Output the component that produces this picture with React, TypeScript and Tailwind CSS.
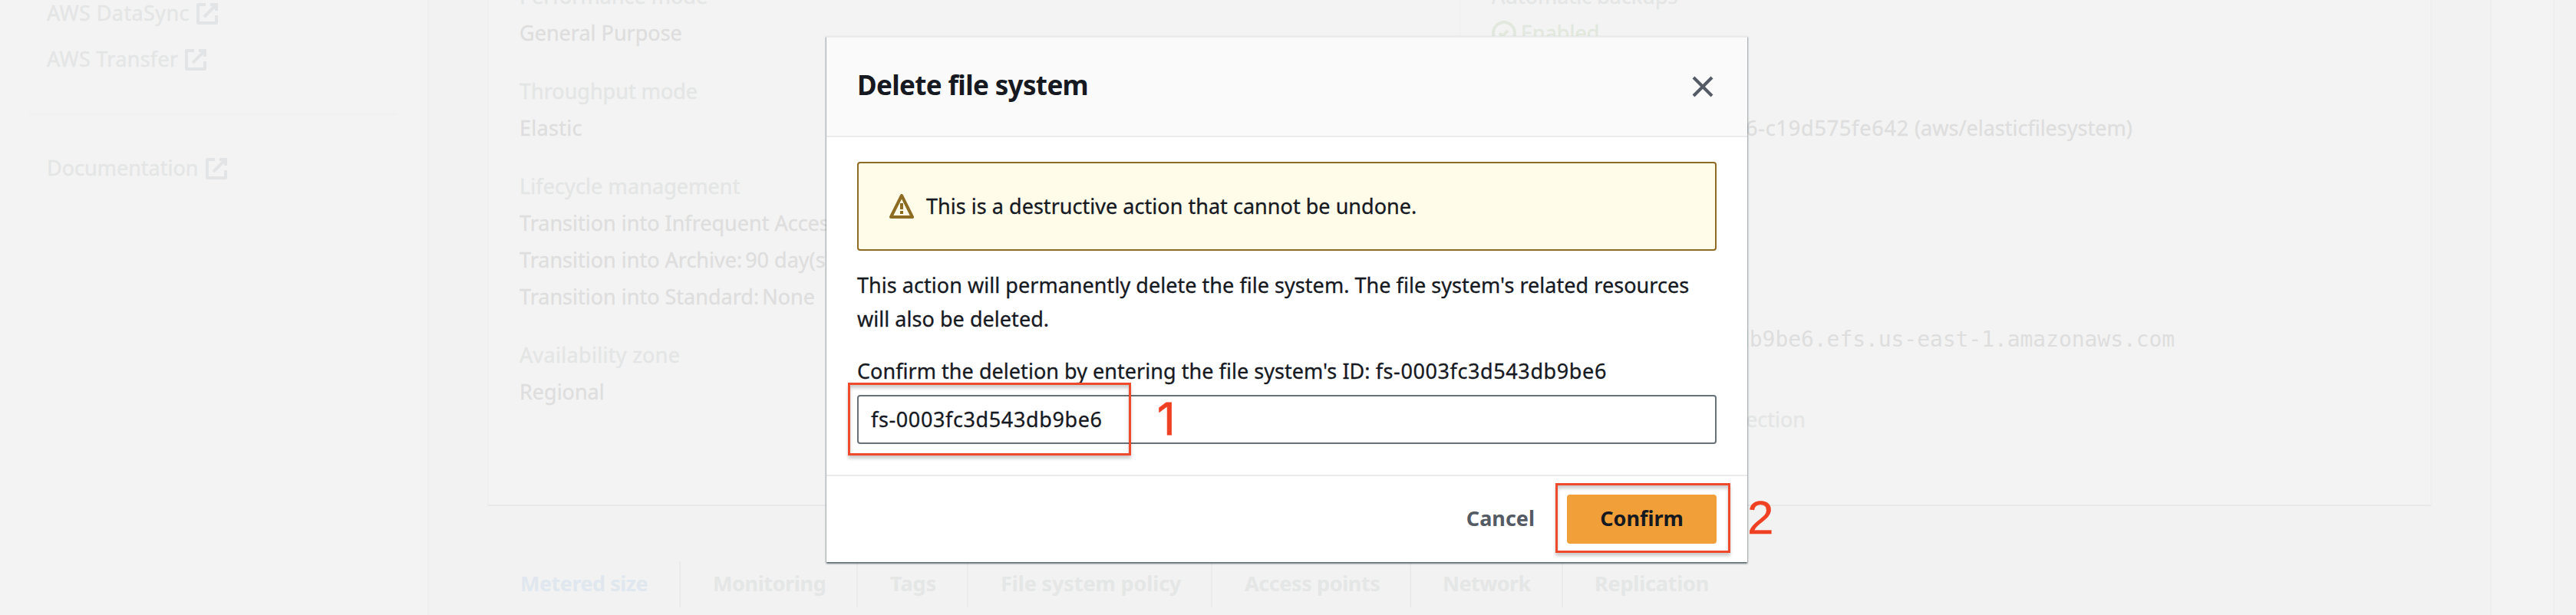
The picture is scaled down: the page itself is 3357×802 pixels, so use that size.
import type { ReactNode } from "react";

function ExternalIcon() {
  return (
    <svg viewBox="0 0 16 16" className="mt-0.5 size-8 shrink-0 fill-none stroke-[#e2e4e6]" strokeWidth="2">
      <path d="M10 2h4v4" />
      <path d="m6 10 8-8" />
      <path d="M14 9.048V14H2V2h5" strokeLinejoin="round" />
    </svg>
  );
}

function NavLink({ children, className }: { children: ReactNode; className: string }) {
  return (
    <a className={`flex h-11 items-center leading-[44px] whitespace-nowrap text-[#e4e5e5] ${className}`}>
      <span>{children}</span>
      <ExternalIcon />
    </a>
  );
}

function Label({ children, className = "" }: { children: ReactNode; className?: string }) {
  return <div className={`h-11 leading-[44px] whitespace-nowrap text-[#e4e5e5] ${className}`}>{children}</div>;
}

function Value({ children, className = "text-[#dedede]" }: { children: ReactNode; className?: string }) {
  return <div className={`h-11 leading-[44px] whitespace-nowrap ${className}`}>{children}</div>;
}

function Field({ children }: { children: ReactNode }) {
  return <div className="flex flex-col gap-1">{children}</div>;
}

function SideNav() {
  return (
    <nav className="w-[559px] shrink-0 border-r-2 border-[#eeeeee] bg-[#f3f3f3]">
      <div className="-mt-[5px] flex flex-col gap-4 pl-[61px]">
        <NavLink className="gap-[7px] tracking-[0.4px]">AWS DataSync</NavLink>
        <NavLink className="gap-[7px] tracking-[0.3px]">AWS Transfer</NavLink>
      </div>
      <div className="mt-[49px] ml-[37px] h-0.5 w-[480px] bg-[#f1f1f1]" />
      <div className="mt-[47px] pl-[61px]">
        <NavLink className="gap-[8px]">Documentation</NavLink>
      </div>
    </nav>
  );
}

function GeneralPanel() {
  return (
    <section className="flex h-[660px] w-full border-x-2 border-b-2 border-x-[#efefef] border-b-[#e8e8e8] bg-[#f3f3f3]">
      <div className="w-[1265px] shrink-0 pl-10">
        <div className="-mt-[27px] flex flex-col gap-8">
          <Field>
            <Label>Performance mode</Label>
            <Value>General Purpose</Value>
          </Field>
          <Field>
            <Label>Throughput mode</Label>
            <Value className="tracking-[0.3px] text-[#dedede]">Elastic</Value>
          </Field>
          <Field>
            <Label className="tracking-[0.1px]">Lifecycle management</Label>
            <Value>Transition into Infrequent Access</Value>
            <Value>
              Transition into Archive:<span className="ml-1">90 day(s)</span>
            </Value>
            <Value>
              Transition into Standard:<span className="ml-1">None</span>
            </Value>
          </Field>
          <Field>
            <Label className="tracking-[0.3px]">Availability zone</Label>
            <Value>Regional</Value>
          </Field>
        </div>
      </div>
      <div className="grow border-l-2 border-[#f1f1f1] pl-10">
        <div className="-mt-[27px] flex flex-col">
          <Field>
            <Label>Automatic backups</Label>
            <Value className="flex items-center gap-[6px] text-[#e2e8de]">
              <svg viewBox="0 0 16 16" className="size-8 fill-none stroke-[#e2e8de]" strokeWidth="2">
                <circle cx="8" cy="8" r="7" />
                <path d="m5 8 2 2 3.521-3.521" />
              </svg>
              Enabled
            </Value>
          </Field>
          <Value className="mt-20 pl-[331px] text-[#dedede]">
            <span className="tracking-[0.8px]">6-c19d575fe642</span> (aws/elasticfilesystem)
          </Value>
          <Value className="mt-[232px] pl-[319px] font-['DejaVu_Sans_Mono',monospace] text-[28px] tracking-[-0.06px] text-[#dedede] [-webkit-text-stroke:0]">
            db9be6.efs.us-east-1.amazonaws.com
          </Value>
          <Label className="mt-[60px] pl-[331px]">ection</Label>
        </div>
      </div>
    </section>
  );
}

function Tab({ children, className }: { children: ReactNode; className: string }) {
  return (
    <div className={`h-[60px] shrink-0 border-[#ebebeb] pt-[7px] leading-[44px] font-bold whitespace-nowrap [-webkit-text-stroke:0] ${className}`}>
      {children}
    </div>
  );
}

function Tabs() {
  return (
    <div className="mt-[72px] flex">
      <Tab className="w-[252px] border-r-2 pl-[43px] tracking-[-0.5px] text-[#e0e7ee]">Metered size</Tab>
      <Tab className="w-[231px] border-r-2 pl-[42px] tracking-[-0.4px] text-[#e5e6e6]">Monitoring</Tab>
      <Tab className="w-[144px] border-r-2 pl-[42px] text-[#e5e6e6]">Tags</Tab>
      <Tab className="w-[318px] border-r-2 pl-[42px] tracking-[-0.1px] text-[#e5e6e6]">File system policy</Tab>
      <Tab className="w-[259px] border-r-2 pl-[42px] tracking-[-0.4px] text-[#e5e6e6]">Access points</Tab>
      <Tab className="w-[198px] border-r-2 pl-[41px] tracking-[-0.55px] text-[#e5e6e6]">Network</Tab>
      <Tab className="w-[240px] pl-[41px] tracking-[-0.2px] text-[#e5e6e6]">Replication</Tab>
    </div>
  );
}

function DeleteDialog() {
  return (
    <div
      role="dialog"
      className="absolute top-[47px] left-[1077px] w-[1200px] bg-white text-[#16191f] shadow-[0_2px_2px_0_rgba(0,28,36,0.5),1px_1px_2px_0_rgba(0,28,36,0.2),-1px_1px_2px_0_rgba(0,28,36,0.2)]"
    >
      <header className="flex h-[132px] items-center justify-between border-y-2 border-[#eaebeb] bg-[#fafafa] pr-[42px] pl-10">
        <h2 className="pb-[5px] text-[35px] leading-[44px] font-bold tracking-[-0.65px] [-webkit-text-stroke:0]">Delete file system</h2>
        <svg viewBox="0 0 16 16" className="size-8 fill-none stroke-[#545b64]" strokeWidth="2">
          <path d="m2 2 12 12" />
          <path d="M14 2 2 14" />
        </svg>
      </header>
      <div className="px-10 pt-8 pb-10">
        <div className="flex h-[116px] items-center gap-4 rounded-[4px] border-2 border-[#8d6b22] bg-[#fffce9] pl-10">
          <svg viewBox="0 0 16 16" className="size-8 fill-none stroke-[#8d6b22]" strokeWidth="2">
            <path d="m8 1 7 14H1L8 1Z" strokeLinejoin="round" />
            <path d="M8 6v4M8 11v2" />
          </svg>
          <span className="pb-px leading-[44px] tracking-[0.03px]">This is a destructive action that cannot be undone.</span>
        </div>
        <p className="mt-[23px] leading-[44px] tracking-[0.04px]">
          This action will permanently delete the file system. The file system's related resources
          <br />
          will also be deleted.
        </p>
        <label className="mt-6 block leading-[44px] tracking-[0.04px] whitespace-nowrap">
          Confirm the deletion by entering the file system's ID: <span className="tracking-[0.6px]">fs-0003fc3d543db9be6</span>
        </label>
        <div className="mt-[9px] flex h-16 items-center rounded-[4px] border-2 border-[#687078] bg-white pl-4 leading-[44px] tracking-[0.62px]">
          fs-0003fc3d543db9be6
        </div>
      </div>
      <footer className="flex h-[114px] items-center justify-end gap-[42px] border-t-2 border-[#eaebeb] pr-10 leading-[44px] font-bold [-webkit-text-stroke:0]">
        <span className="pb-0.5 text-[#545b64]">Cancel</span>
        <button className="h-16 w-[195px] rounded-[4px] bg-[#f19f39] pb-0.5 text-[#16191f]">Confirm</button>
      </footer>
    </div>
  );
}

function Annotations() {
  return (
    <>
      <div className="absolute top-[499px] left-[1105px] h-[95px] w-[369px] border-[3px] border-[#ee4a2b] shadow-[0_4px_4px_rgba(0,0,0,0.2),inset_0_4px_4px_rgba(0,0,0,0.2)]" />
      <div className="absolute top-[511px] left-[1508px] font-['Inter',sans-serif] text-[58px] leading-[70px] text-[#f04023] [-webkit-text-stroke:0.8px]">1</div>
      <div className="absolute top-[630px] left-[2027px] h-[91px] w-[228px] border-[3px] border-[#ee4a2b] shadow-[0_4px_4px_rgba(0,0,0,0.2),inset_0_4px_4px_rgba(0,0,0,0.2)]" />
      <div className="absolute top-[640px] left-[2277px] font-['Liberation_Sans',sans-serif] text-[62px] leading-[70px] text-[#f04023]">2</div>
    </>
  );
}

export default function App() {
  return (
    <div className="relative flex h-[802px] w-full overflow-hidden bg-[#f2f2f2] font-['Noto_Sans',sans-serif] text-[27px] [-webkit-text-stroke:0.3px]">
      <SideNav />
      <main className="flex grow pl-[76px]">
        <div className="w-[2534px] shrink-0">
          <GeneralPanel />
          <Tabs />
        </div>
        <aside className="ml-[76px] h-full w-[84px] shrink-0 border-x-2 border-[#eeeeee] bg-[#f3f3f3]" />
      </main>
      <DeleteDialog />
      <Annotations />
    </div>
  );
}
